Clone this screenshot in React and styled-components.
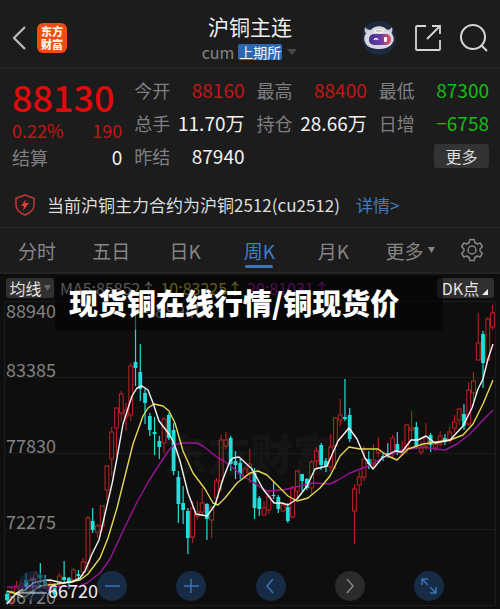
import { useState } from 'react';
import styled, { createGlobalStyle } from 'styled-components';

const GlobalStyle = createGlobalStyle`
    * {
        box-sizing: border-box;
    }
    body {
        margin: 0;
        background-color: #0e0e0e;
        color: #f0f0f0;
        font-family: "Noto Sans CJK SC", "Noto Sans", sans-serif;
    }
    button {
        font-family: inherit;
        border: none;
        padding: 0;
        margin: 0;
        background: none;
        color: inherit;
        cursor: pointer;
    }
    svg {
        display: block;
    }
`;

const Page = styled.div`
    background-color: #1c1c1c;
`;

const Header = styled.header`
    display: grid;
    grid-template-columns: 1fr auto 1fr;
    align-items: center;
    height: 69px;
    padding: 8px 12px 0;
    border-bottom: 2px solid #242424;
`;

const HeaderSide = styled.div`
    display: flex;
    align-items: center;
    gap: ${(props) => props.$gap};
    justify-content: ${(props) => (props.$end ? 'flex-end' : 'flex-start')};
`;

const IconButton = styled.button`
    display: flex;
    align-items: center;
    justify-content: center;
`;

const Logo = styled.span`
    display: flex;
    flex-direction: column;
    align-items: center;
    justify-content: center;
    width: 30px;
    height: 30px;
    border-radius: 6px;
    background-color: #ee4d0d;
    color: #fff3ea;
    font-size: 11px;
    font-weight: 900;
    line-height: 13px;
`;

const TitleBox = styled.div`
    display: flex;
    flex-direction: column;
    align-items: center;
`;

const Title = styled.h1`
    margin: 0;
    font-size: 21px;
    font-weight: 400;
    line-height: 28px;
`;

const SubTitle = styled.div`
    display: flex;
    align-items: center;
    gap: 4px;
    height: 24px;
    color: #858585;
    font-size: 16px;
    line-height: 22px;
`;

const Exchange = styled.span`
    padding: 0 1px;
    border-radius: 2px;
    background-color: #2c68b0;
    color: #f4f8ff;
    font-size: 14px;
    line-height: 16px;
`;

const Quote = styled.section`
    display: grid;
    grid-template-columns: repeat(4, 1fr);
    column-gap: 12px;
    padding: 4px 11px 8px 12px;
    border-bottom: 1px solid #202020;
`;

const QuoteColumn = styled.div`
    display: flex;
    flex-direction: column;
`;

const Price = styled.div`
    height: 46px;
    color: #dd0b0b;
    font-size: 36px;
    font-weight: 500;
    line-height: 46px;
`;

const QuoteRow = styled.div`
    display: flex;
    align-items: center;
    justify-content: space-between;
    height: ${(props) => props.$height || '33px'};
    color: #7f7f82;
    font-size: 18px;
    white-space: nowrap;
`;

const colors = {
    red: '#c31616',
    green: '#14bd14',
    white: '#f2f2f2',
};

const Value = styled.span`
    color: ${(props) => colors[props.$color || 'white']};
    font-size: ${(props) => (props.$small ? '18px' : '19px')};
`;

const MoreButton = styled.button`
    width: 55px;
    height: 24px;
    margin-left: auto;
    border-radius: 3px;
    background-color: #333;
    color: #ddd;
    font-size: 16px;
    line-height: 24px;
`;

const Notice = styled.section`
    display: flex;
    align-items: center;
    height: 46px;
    padding: 0 15px;
    border-bottom: 1px solid #272727;
    color: #dedede;
    font-size: 17px;
    white-space: nowrap;
`;

const NoticeText = styled.span`
    margin-left: 12px;
`;

const NoticeLink = styled.a`
    margin-left: 16px;
    color: #3e7bc0;
    text-decoration: none;
`;

const Tabs = styled.nav`
    display: grid;
    grid-template-columns: repeat(5, 15fr) 16fr 9fr;
    height: 46px;
    padding-right: 6px;
    border-bottom: 2px solid #232323;
`;

const Tab = styled.button`
    display: flex;
    align-items: center;
    justify-content: center;
    gap: 4px;
    position: relative;
    color: ${(props) => (props.$active ? '#3f7cc4' : '#858585')};
    font-size: 19px;

    &::after {
        content: '';
        display: ${(props) => (props.$active ? 'block' : 'none')};
        position: absolute;
        bottom: 4px;
        width: 28px;
        height: 3px;
        border-radius: 2px;
        background-color: #3f74b8;
    }
`;

const ChartPane = styled.section`
    position: relative;
    background-color: #0e0e0e;
`;

const ChartHeader = styled.div`
    display: flex;
    align-items: center;
    height: 27px;
    padding: 0 6px;
    font-size: 16px;
    white-space: nowrap;
`;

const Tag = styled.button`
    display: flex;
    align-items: center;
    justify-content: center;
    gap: 2px;
    width: ${(props) => props.$width};
    height: 20px;
    margin-left: ${(props) => (props.$right ? 'auto' : '0')};
    margin-right: ${(props) => (props.$right ? '0' : '2px')};
    border-radius: 3px;
    background-color: #303030;
    color: #e4e4e4;
    font-size: 16px;
    line-height: 20px;
`;

const Average = styled.span`
    margin-left: 4px;
    color: ${(props) => props.$color};
`;

const Chart = styled.svg`
    width: 100%;
    height: auto;
    overflow: visible;
    font-family: "Noto Sans CJK SC", "Noto Sans", sans-serif;
    font-size: 18px;
`;

const Caption = styled.div`
    position: absolute;
    top: 2px;
    left: 11%;
    right: 57px;
    height: 54px;
    padding-left: 14px;
    background-color: rgba(0, 0, 0, 0.5);
    color: #fff;
    font-size: 29px;
    font-weight: 900;
    line-height: 52px;
    white-space: nowrap;
`;

const Controls = styled.div`
    position: absolute;
    bottom: 9px;
    left: 0;
    right: 0;
    display: flex;
    justify-content: space-between;
    padding: 0 56px 0 18px;
`;

const RoundButton = styled.button`
    display: flex;
    align-items: center;
    justify-content: center;
    width: 30px;
    height: 30px;
    border-radius: 50%;
    background-color: ${(props) => (props.$muted ? '#2b2b2b' : '#172b45')};
    color: ${(props) => (props.$muted ? '#858585' : '#3a74b8')};
    opacity: ${(props) => (props.$faded ? 0.6 : 1)};
`;

const tabs = ['分时', '五日', '日K', '周K', '月K'];

const gridLines = [301, 377, 453, 529, 605];

const axisLabels = [
    { text: '88940', y: 317 },
    { text: '83385', y: 376 },
    { text: '77830', y: 452 },
    { text: '72275', y: 528 },
    { text: '66720', y: 603 },
];

// kind (u = up, d = down), high, body top, body bottom, low
const candles = [
    ['d', 590, 593, 599, 603], ['u', 587, 592, 600, 605], ['u', 580, 585, 592, 594],
    ['u', 580, 583, 589, 592], ['d', 572, 579, 585, 592], ['u', 575, 579, 587, 590],
    ['u', 570, 573, 578, 584], ['d', 562, 574, 577, 582], ['d', 574, 578, 584, 588],
    ['u', 580, 583, 590, 592], ['d', 584, 587, 593, 596], ['u', 572, 575, 583, 590],
    ['d', 560, 576, 579, 583], ['d', 576, 577, 581, 588], ['u', 567, 569, 579, 582],
    ['d', 569, 573, 575, 577], ['u', 557, 561, 571, 575], ['u', 515, 517, 562, 570],
    ['d', 507, 520, 529, 532], ['u', 523, 525, 531, 537], ['u', 505, 505, 525, 530],
    ['u', 464, 465, 489, 500], ['u', 426, 431, 458, 475], ['u', 407, 407, 427, 455],
    ['u', 390, 393, 412, 421], ['u', 402, 409, 416, 430], ['u', 362, 365, 414, 420],
    ['d', 303, 361, 367, 385], ['d', 343, 371, 388, 400], ['d', 388, 392, 402, 423],
    ['d', 412, 415, 429, 435], ['d', 416, 431, 433, 454], ['d', 435, 440, 446, 458],
    ['u', 416, 418, 442, 452], ['d', 412, 414, 437, 439], ['d', 422, 429, 470, 474],
    ['d', 470, 476, 503, 522], ['d', 485, 502, 509, 523], ['d', 507, 510, 537, 553],
    ['u', 500, 507, 536, 542], ['u', 500, 511, 515, 519], ['u', 487, 502, 511, 515],
    ['d', 502, 503, 518, 539], ['u', 505, 506, 519, 537], ['u', 477, 480, 497, 503],
    ['u', 434, 439, 480, 490], ['u', 431, 439, 445, 448], ['d', 435, 437, 463, 470],
    ['d', 450, 460, 464, 478], ['d', 457, 462, 473, 478], ['u', 465, 468, 475, 478],
    ['u', 448, 463, 473, 482], ['d', 467, 472, 507, 518], ['d', 495, 497, 508, 515],
    ['u', 500, 507, 514, 514], ['u', 490, 495, 509, 513], ['d', 480, 494, 495, 498],
    ['d', 494, 496, 508, 512], ['u', 502, 504, 510, 511], ['d', 502, 506, 520, 522],
    ['u', 485, 487, 516, 517], ['u', 469, 470, 490, 497], ['d', 473, 473, 480, 490],
    ['d', 477, 478, 487, 489], ['u', 459, 461, 487, 493], ['u', 446, 450, 460, 468],
    ['d', 442, 444, 464, 469], ['d', 457, 460, 466, 471], ['u', 433, 446, 466, 470],
    ['u', 416, 417, 445, 468], ['u', 398, 414, 419, 425], ['d', 378, 416, 418, 420],
    ['d', 407, 414, 438, 441], ['u', 483, 488, 510, 543], ['u', 470, 476, 484, 493],
    ['u', 445, 458, 476, 480], ['d', 450, 458, 463, 468], ['u', 443, 459, 463, 466],
    ['u', 436, 449, 452, 456], ['d', 452, 455, 457, 460], ['d', 442, 452, 453, 457],
    ['u', 434, 437, 452, 457], ['d', 431, 443, 452, 454], ['u', 440, 449, 453, 455],
    ['u', 423, 424, 447, 452], ['u', 410, 427, 429, 440], ['d', 421, 426, 445, 448],
    ['u', 440, 447, 451, 454], ['u', 422, 436, 445, 449], ['d', 432, 434, 444, 451],
    ['u', 440, 443, 447, 450], ['u', 430, 435, 443, 446], ['d', 433, 437, 441, 444],
    ['u', 426, 431, 440, 442], ['u', 414, 421, 427, 432], ['u', 407, 408, 419, 424],
    ['d', 403, 413, 425, 429], ['u', 381, 389, 423, 425], ['u', 371, 380, 392, 400],
    ['u', 312, 342, 359, 359], ['d', 330, 333, 362, 387], ['u', 316, 318, 359, 360],
    ['u', 304, 312, 326, 329],
];

const averages = [
    {
        name: 'ma20',
        color: '#991499',
        points: '7,586 50,586 80,585 87,582 100,572 110,558 123,530 137,501 150,478 163,458 169,449 174,444 182,442 197,442 203,445 218,457 224,460 233,467 243,475 253,481 260,486 267,490 283,489 300,485 313,482 330,483 338,479 350,472 368,465 382,457 403,449 423,446 435,448 445,449 457,443 470,433 483,419 493,409',
    },
    {
        name: 'ma10',
        color: '#e5d852',
        points: '7,590 17,593 25,596 33,590 40,585 57,583 80,579 88,573 100,557 108,537 117,507 125,475 133,443 143,415 148,407 154,403 163,405 169,410 175,422 183,450 193,472 205,488 213,502 218,504 225,497 237,482 250,472 258,470 267,474 277,484 288,495 297,500 308,497 320,487 330,475 340,455 349,446 360,448 378,448 388,455 397,459 408,448 423,443 450,439 463,434 473,423 483,403 493,379',
    },
    {
        name: 'ma5',
        color: '#f4f4f4',
        points: '7,603 12,597 17,592 25,589 33,582 41,580 50,579 63,582 72,581 80,577 85,570 92,553 99,539 105,513 112,483 117,457 123,423 132,395 137,387 142,385 148,389 153,402 159,420 169,433 174,442 180,460 188,492 196,513 207,515 215,504 223,478 230,460 233,457 239,456 252,468 263,488 274,502 282,502 288,504 297,498 307,485 315,468 323,466 327,465 338,440 349,427 357,438 365,457 373,468 382,457 395,450 402,451 411,439 418,439 426,435 435,442 450,439 463,425 472,407 478,388 483,378 488,358 493,343',
    },
];

function Candle({ index, data }) {
    const [kind, high, top, bottom, low] = data;
    const x = 7 + index * 4.76;
    if (kind === 'd') {
        return (
            <g fill="#25dcdc">
                <rect x={x - 0.6} y={high} width="1.2" height={low - high} />
                <rect x={x - 1.9} y={top} width="3.8" height={Math.max(bottom - top, 1)} />
            </g>
        );
    }
    return (
        <g stroke="#b32222" strokeWidth="1.1" fill="none">
            <path d={`M${x} ${high}V${top}M${x} ${bottom}V${low}`} />
            <rect x={x - 1.9} y={top} width="3.8" height={bottom - top} />
        </g>
    );
}

function PriceChart() {
    return (
        <Chart viewBox="0 300 500 309" role="img" aria-label="周K">
            <text x="164" y="470" fill="#151515" fontSize="43" fontWeight="900">东方财富</text>
            <g stroke="#1b1b1b">
                {gridLines.map((y) => (
                    <line key={y} x1="5" x2="495" y1={y - 0.5} y2={y - 0.5} />
                ))}
                <path d="M4.500 300V605M495.500 300V605" strokeWidth="1.500" />
            </g>
            <g fill="#828282">
                {axisLabels.map((label) => (
                    <text key={label.text} x="6" y={label.y}>{label.text}</text>
                ))}
            </g>
            {candles.map((data, index) => (
                <Candle key={index} index={index} data={data} />
            ))}
            {averages.map((line) => (
                <polyline
                    key={line.name}
                    points={line.points}
                    fill="none"
                    stroke={line.color}
                    strokeWidth="1.400"
                    strokeLinejoin="round"
                />
            ))}
            <path d="M153 311H138M144 307L138 311L144 315" stroke="#aaa" fill="none" />
            <text x="155" y="317" fill="#aaa">88940</text>
        </Chart>
    );
}

const LowMark = styled.svg`
    position: absolute;
    left: 0;
    bottom: 0;
    width: 20%;
    overflow: visible;
    font-family: "Noto Sans CJK SC", "Noto Sans", sans-serif;
    font-size: 18px;
`;

function RobotIcon() {
    return (
        <svg width="34" height="34" viewBox="0 0 34 34">
            <defs>
                <linearGradient id="visor">
                    <stop offset="0" stopColor="#3e348e" />
                    <stop offset="0.55" stopColor="#703aa6" />
                    <stop offset="1" stopColor="#e2575d" />
                </linearGradient>
            </defs>
            <circle cx="17" cy="17" r="17" fill="#1e2a42" />
            <path d="M3 6C2 10 3 13 6 13L10 9C6 9 4 8 3 6ZM30 6C31 10 30 13 27 13L23 9C27 9 29 8 30 6Z" fill="#c6c9d6" />
            <path d="M9 9C12 4 22 4 25 9C31 11 33 18 31 21C28 27 22 28 17 28S5 27 3 21C1 17 3 11 9 9Z" fill="#d8d7df" />
            <path d="M12 9Q17 7 22 9L21 12H13Z" fill="#f1eeee" />
            <path d="M14 10H20" stroke="#bda88d" />
            <rect x="7" y="13" width="22" height="11" rx="5" fill="url(#visor)" />
            <path d="M12 19Q14 16 16 19" stroke="#fff" strokeWidth="1.300" fill="none" />
            <rect x="22" y="16" width="3" height="5" rx="1" fill="#fff" />
        </svg>
    );
}

function GearIcon() {
    return (
        <svg width="24" height="24" viewBox="0 0 24 24" fill="none" stroke="#858585" strokeWidth="1.500" strokeLinejoin="round">
            <path d="M9.800 1.500H14.200L14.800 4.500L17.300 6L20.200 5L22.400 8.800L20.100 10.800V13.200L22.400 15.200L20.200 19L17.300 18L14.800 19.500L14.200 22.500H9.800L9.200 19.500L6.700 18L3.800 19L1.600 15.200L3.900 13.200V10.800L1.600 8.800L3.800 5L6.700 6L9.200 4.500Z" />
            <circle cx="12" cy="12" r="4" />
        </svg>
    );
}

function ControlIcon({ d }) {
    return (
        <svg width="18" height="18" viewBox="0 0 18 18" fill="none" stroke="currentColor" strokeWidth="1.500">
            <path d={d} />
        </svg>
    );
}

const controls = [
    { label: '移动', d: 'M9 1V17M1 9H17M6 4L9 1L12 4M6 14L9 17L12 14M4 6L1 9L4 12M14 6L17 9L14 12', faded: true },
    { label: '缩小', d: 'M2 9H17' },
    { label: '放大', d: 'M2 9H17M9 2V16' },
    { label: '向左', d: 'M11 2L5 9L11 16' },
    { label: '向右', d: 'M6 2L12 9L6 16', muted: true },
    { label: '全屏', d: 'M2 8V2H8M2 2L8 8M10 10L16 16M10 16H16V10' },
];

export default function App() {
    const [active, setActive] = useState('周K');

    return (
        <Page>
            <GlobalStyle />
            <Header>
                <HeaderSide $gap="11px">
                    <IconButton aria-label="返回">
                        <svg width="14" height="24" viewBox="0 0 14 24" fill="none" stroke="#bcbcbc" strokeWidth="2.200">
                            <path d="M13 1L2 12L13 23" />
                        </svg>
                    </IconButton>
                    <Logo>
                        <span>东方</span>
                        <span>财富</span>
                    </Logo>
                </HeaderSide>
                <TitleBox>
                    <Title>沪铜主连</Title>
                    <SubTitle>
                        cum
                        <Exchange>上期所</Exchange>
                        <svg width="12" height="8" viewBox="0 0 12 8">
                            <path d="M1 1H11L6 7Z" fill="#494949" />
                        </svg>
                    </SubTitle>
                </TitleBox>
                <HeaderSide $gap="18px" $end>
                    <IconButton aria-label="助手">
                        <RobotIcon />
                    </IconButton>
                    <IconButton aria-label="分享">
                        <svg width="28" height="28" viewBox="0 0 28 28" fill="none" stroke="#d6d6d6" strokeWidth="1.800">
                            <path d="M12 2H3Q2 2 2 3V25Q2 26 3 26H25Q26 26 26 25V16M18 2H26V10M26 2L13 15" />
                        </svg>
                    </IconButton>
                    <IconButton aria-label="搜索">
                        <svg width="28" height="28" viewBox="0 0 28 28" fill="none" stroke="#d6d6d6" strokeWidth="2">
                            <circle cx="13" cy="13" r="12" />
                            <path d="M21 21L27 27" />
                        </svg>
                    </IconButton>
                </HeaderSide>
            </Header>

            <Quote>
                <QuoteColumn>
                    <Price>88130</Price>
                    <QuoteRow $height="21px">
                        <Value $color="red" $small>0.22%</Value>
                        <Value $color="red" $small>190</Value>
                    </QuoteRow>
                    <QuoteRow>
                        结算<Value>0</Value>
                    </QuoteRow>
                </QuoteColumn>
                <QuoteColumn>
                    <QuoteRow>今开<Value $color="red">88160</Value></QuoteRow>
                    <QuoteRow>总手<Value>11.70万</Value></QuoteRow>
                    <QuoteRow>昨结<Value>87940</Value></QuoteRow>
                </QuoteColumn>
                <QuoteColumn>
                    <QuoteRow>最高<Value $color="red">88400</Value></QuoteRow>
                    <QuoteRow>持仓<Value>28.66万</Value></QuoteRow>
                </QuoteColumn>
                <QuoteColumn>
                    <QuoteRow>最低<Value $color="green">87300</Value></QuoteRow>
                    <QuoteRow>日增<Value $color="green">−6758</Value></QuoteRow>
                    <QuoteRow><MoreButton>更多</MoreButton></QuoteRow>
                </QuoteColumn>
            </Quote>

            <Notice>
                <svg width="20" height="22" viewBox="0 0 20 22">
                    <path d="M10 1L18 4H19V11C19 16 15 19 10 21C5 19 1 16 1 11V4H2Z" fill="none" stroke="#c23737" strokeWidth="1.500" strokeLinejoin="round" />
                    <path d="M11 5L6 12H9L8 17L14 9H10Z" fill="#e23c3c" />
                </svg>
                <NoticeText>当前沪铜主力合约为沪铜2512(cu2512)</NoticeText>
                <NoticeLink href="#detail">详情&gt;</NoticeLink>
            </Notice>

            <Tabs>
                {tabs.map((tab) => (
                    <Tab key={tab} $active={tab === active} onClick={() => setActive(tab)}>
                        {tab}
                    </Tab>
                ))}
                <Tab>
                    更多
                    <svg width="7" height="7" viewBox="0 0 7 7">
                        <path d="M0 0H7L3.500 6Z" fill="#858585" />
                    </svg>
                </Tab>
                <Tab aria-label="设置">
                    <GearIcon />
                </Tab>
            </Tabs>

            <ChartPane>
                <ChartHeader>
                    <Tag $width="48px">
                        均线
                        <svg width="7" height="6" viewBox="0 0 7 6">
                            <path d="M0 0H7L3.500 6Z" fill="#666" />
                        </svg>
                    </Tag>
                    <Average $color="#b0b0b0">MA5:85852↑</Average>
                    <Average $color="#c4b83c">10:83225↑</Average>
                    <Average $color="#a318a3">20:81031↑</Average>
                    <Tag $width="57px" $right>
                        DK点
                        <svg width="8" height="16" viewBox="0 0 8 16">
                            <path d="M7 9V15H1Z" fill="#f0f0f0" />
                        </svg>
                    </Tag>
                </ChartHeader>
                <PriceChart />
                <Caption>现货铜在线行情/铜现货价</Caption>
                <Controls>
                    {controls.map((control) => (
                        <RoundButton
                            key={control.label}
                            aria-label={control.label}
                            $muted={control.muted}
                            $faded={control.faded}
                        >
                            <ControlIcon d={control.d} />
                        </RoundButton>
                    ))}
                </Controls>
                <LowMark viewBox="0 0 100 36">
                    <path d="M47 19H16M23 15L16 19L23 23" stroke="#ddd" fill="none" />
                    <text x="48" y="24" fill="#eee">66720</text>
                </LowMark>
            </ChartPane>
        </Page>
    );
}
